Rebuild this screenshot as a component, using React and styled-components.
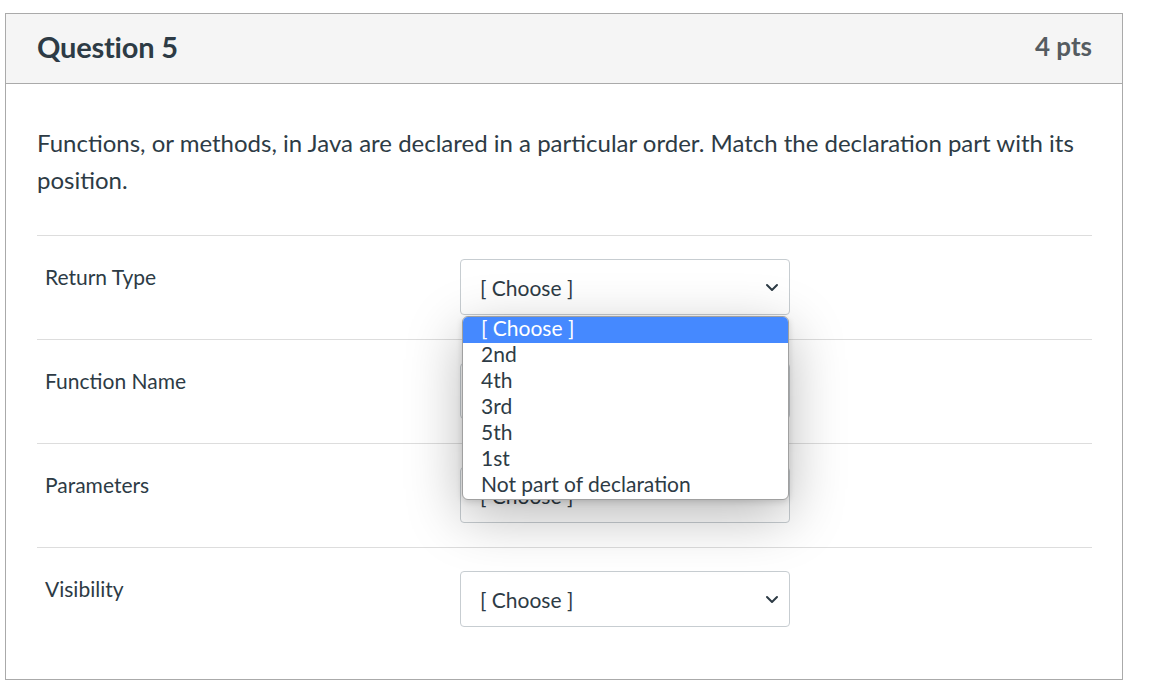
import React from "react";
import styled, { createGlobalStyle } from "styled-components";

const Global = createGlobalStyle`
  html, body { margin: 0; padding: 0; background: #fff; }
  body { font-family: Lato, "Noto Sans", sans-serif; color: #2d3b45; }
`;

const Page = styled.div`
  padding: 13px 0 0 5px;
`;

const Card = styled.div`
  width: 1116px;
  border: 1px solid #aaaaaa;
  background: #fff;
`;

const Header = styled.div`
  height: 70px;
  background: #f5f5f5;
  border-bottom: 1px solid #aaaaaa;
  display: flex;
  align-items: center;
  justify-content: space-between;
  padding: 0 30px 5px 31px;
  box-sizing: border-box;
`;

const Title = styled.h2`
  margin: 0;
  font-size: 29px;
  font-weight: 700;
  color: #2d3b45;
  letter-spacing: -0.2px;
`;

const Points = styled.div`
  font-size: 26px;
  font-weight: 700;
  color: #555c61;
`;

const Body = styled.div`
  padding: 40px 30px 28px 31px;
`;

const Prompt = styled.p`
  margin: 0 0 37px 0;
  font-size: 24px;
  line-height: 37px;
  color: #2d3b45;
`;

const Row = styled.div`
  display: grid;
  grid-template-columns: 423px 330px;
  border-top: 1px solid #dddddd;
  padding: 23px 0 24px 0;
  height: 56px;
`;

const Label = styled.div`
  padding: 6px 0 0 8px;
  font-size: 21px;
  line-height: 24px;
  color: #2d3b45;
`;

const SelectWrap = styled.div`
  position: relative;
`;

const SelectBox = styled.div`
  height: 56px;
  box-sizing: border-box;
  border: 1px solid #c7cdd1;
  border-radius: 4px;
  background: #fff;
  display: flex;
  align-items: center;
  justify-content: space-between;
  padding: 0 8px 0 19px;
  font-size: 21px;
  color: #2d3b45;
`;

const Chevron = styled.svg`
  width: 14px;
  height: 14px;
  margin-right: 2px;
`;

const Dropdown = styled.div`
  position: absolute;
  top: 57px;
  left: 2px;
  width: 327px;
  box-sizing: border-box;
  border: 1px solid #a0a0a0;
  border-radius: 6px;
  background: #fff;
  overflow: hidden;
  box-shadow: 0 16px 56px rgba(0, 0, 0, 0.28), 0 2px 6px rgba(0, 0, 0, 0.14);
  z-index: 10;
`;

const Option = styled.div`
  height: 26px;
  line-height: 22px;
  padding-left: 18px;
  font-size: 21px;
  color: ${(p) => (p.$active ? "#ffffff" : "#2d3b45")};
  background: ${(p) => (p.$active ? "#4589ff" : "transparent")};
`;

const rows = ["Return Type", "Function Name", "Parameters", "Visibility"];
const options = ["[ Choose ]", "2nd", "4th", "3rd", "5th", "1st", "Not part of declaration"];

function Select({ open }) {
  return (
    <SelectWrap>
      <SelectBox>
        <span>[ Choose ]</span>
        <Chevron viewBox="0 0 14 14" fill="none">
          <path d="M2 5 L7 10 L12 5" stroke="#2d3b45" strokeWidth="2" strokeLinecap="round" strokeLinejoin="round" />
        </Chevron>
      </SelectBox>
      {open && (
        <Dropdown>
          {options.map((o, i) => (
            <Option key={o} $active={i === 0}>{o}</Option>
          ))}
        </Dropdown>
      )}
    </SelectWrap>
  );
}

export default function App() {
  return (
    <>
      <Global />
      <Page>
        <Card>
          <Header>
            <Title>Question 5</Title>
            <Points>4 pts</Points>
          </Header>
          <Body>
            <Prompt>
              Functions, or methods, in Java are declared in a particular order. Match the declaration part with its position.
            </Prompt>
            {rows.map((r, i) => (
              <Row key={r}>
                <Label>{r}</Label>
                <Select open={i === 0} />
              </Row>
            ))}
          </Body>
        </Card>
      </Page>
    </>
  );
}
